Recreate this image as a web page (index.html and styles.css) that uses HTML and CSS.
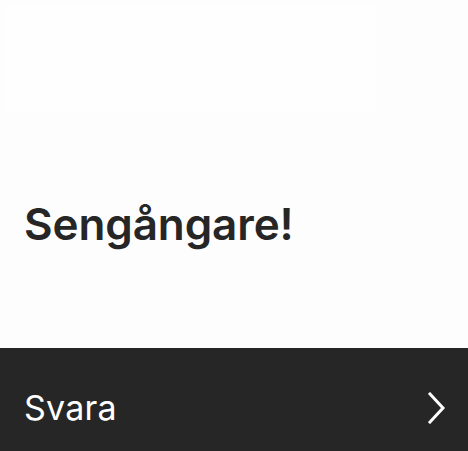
FILE: index.html
```html
<!DOCTYPE html>
<html lang="sv">
<head>
<meta charset="utf-8">
<link rel="stylesheet" href="styles.css">
</head>
<body>
<div class="page">
  <div class="top">
    <div class="card"></div>
  </div>
  <h1 class="title">Sengångare!</h1>
  <a class="answer" href="#">
    <span class="answer-label">Svara</span>
    <svg class="chev" width="18" height="32" viewBox="0 0 18 32" aria-hidden="true">
      <path d="M2 2 L15 16 L2 30" fill="none" stroke="#ffffff" stroke-width="3" stroke-linecap="square" stroke-linejoin="miter"/>
    </svg>
  </a>
</div>
</body>
</html>
```

FILE: styles.css
```css
html, body {
  margin: 0;
  padding: 0;
  background: #fdfdfd;
}
body {
  font-family: Inter, "Noto Sans", sans-serif;
  width: 468px;
  height: 451px;
  overflow: hidden;
}
.page {
  display: flex;
  flex-direction: column;
  height: 451px;
}
.top {
  height: 114px;
  padding: 6px 0 0 6px;
  box-sizing: border-box;
}
.card {
  width: 370px;
  height: 107px;
  background: #fefefe;
}
.title {
  margin: 0;
  padding: 84px 0 0 24px;
  font-size: 44px;
  line-height: 53px;
  font-weight: 600;
  color: #262626;
  letter-spacing: -0.1px;
  flex: 1;
}
.answer {
  height: 103px;
  background: #262626;
  display: flex;
  align-items: center;
  justify-content: space-between;
  padding: 0 22px 0 24px;
  text-decoration: none;
  color: #ffffff;
}
.answer-label {
  font-size: 34px;
  font-weight: 400;
  letter-spacing: 0.2px;
  padding-top: 16px;
}
.chev {
  display: block;
  margin-top: 16px;
}
```
